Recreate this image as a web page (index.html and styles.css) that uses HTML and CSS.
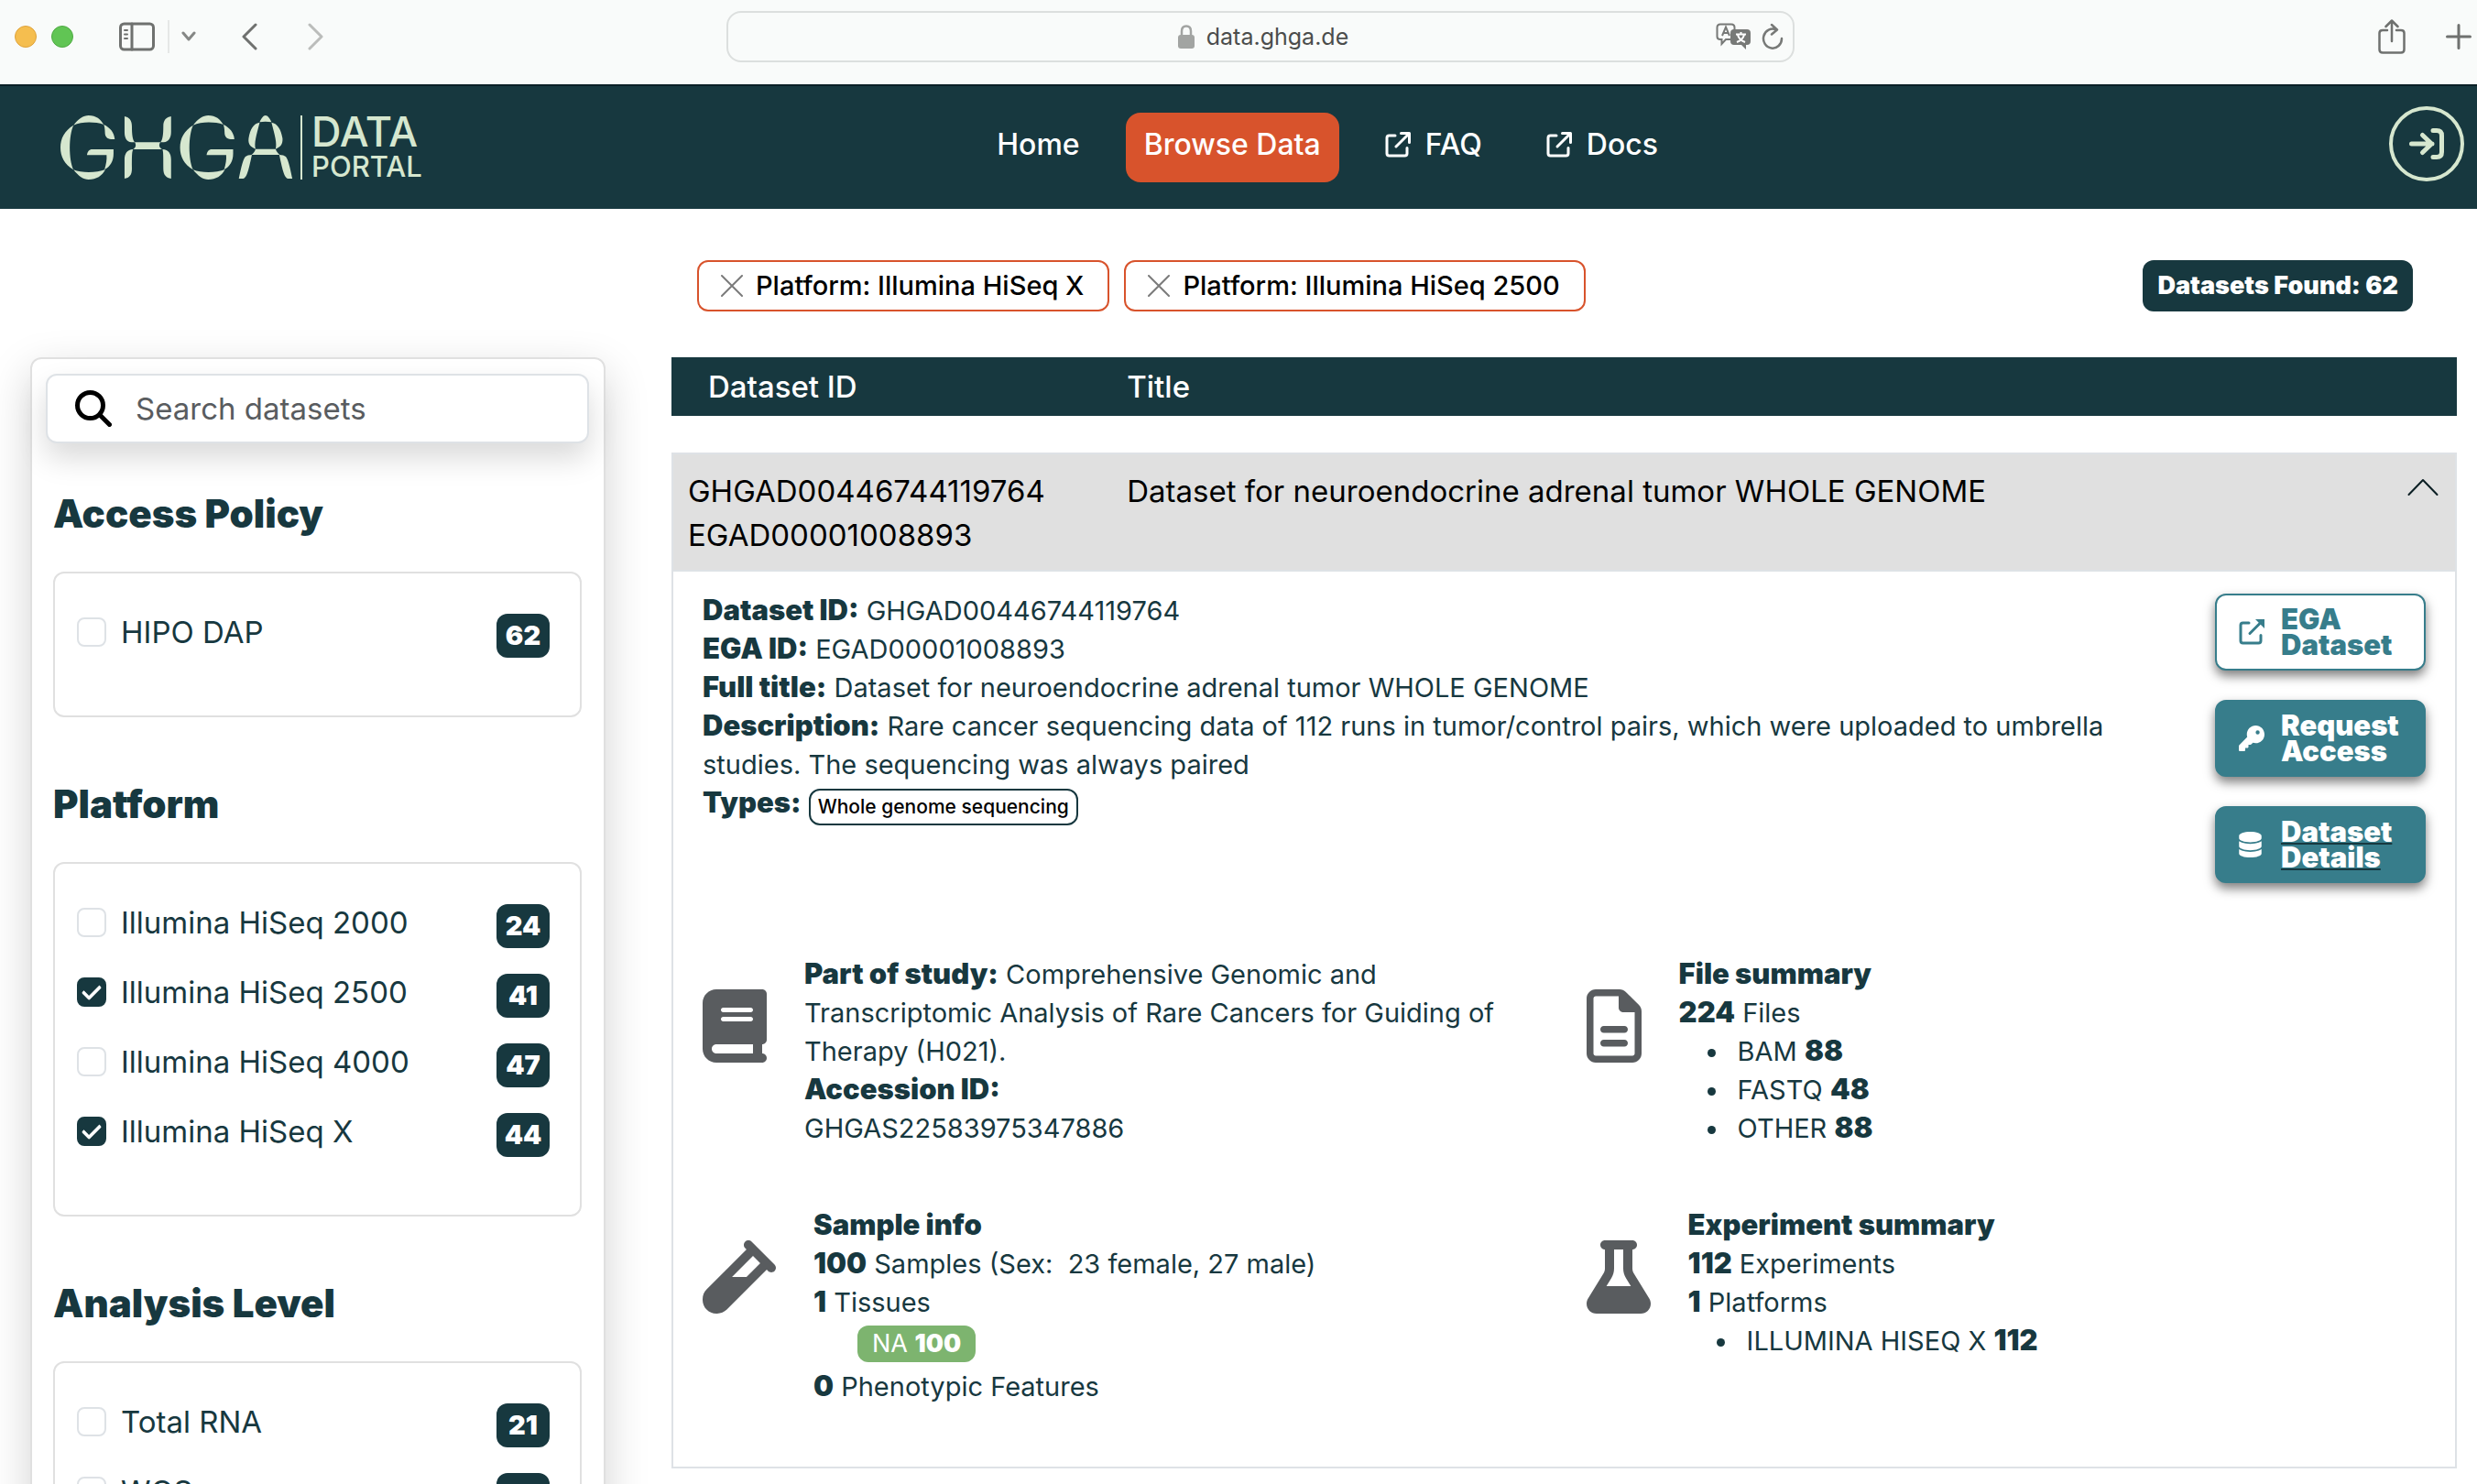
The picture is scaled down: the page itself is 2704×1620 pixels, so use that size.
FILE: index.html
```html
<!DOCTYPE html>
<html lang="en">
<head>
<meta charset="utf-8">
<meta name="viewport" content="width=device-width, initial-scale=1">
<title>GHGA Data Portal</title>
<link rel="stylesheet" href="styles.css">
</head>
<body>
<svg class="sprite" aria-hidden="true">
  <symbol id="external" viewBox="0 0 28 28"><path d="M11 4H4.500Q2 4 2 6.500V23.500Q2 26 4.500 26H21.500Q24 26 24 23.500V17.500M12 16L24 4" fill="none" stroke="currentColor" stroke-width="3" stroke-linecap="round" stroke-linejoin="round"/><path d="M17.500 1.500H26.500V11.500" fill="none" stroke="currentColor" stroke-width="3" stroke-linecap="round" stroke-linejoin="round"/></symbol>
  <symbol id="cross" viewBox="0 0 24 24"><path d="M1 1L23 23M23 1L1 23" fill="none" stroke="currentColor" stroke-width="2" stroke-linecap="round"/></symbol>
</svg>

<div class="browser">
  <div class="browser-left">
    <div class="lights"><span class="light light-min"></span><span class="light light-max"></span></div>
    <div class="tabs-tools">
      <button class="plain" aria-label="Show sidebar"><svg width="40" height="32" viewBox="0 0 40 32" fill="none" stroke="#6f716f" stroke-width="3" stroke-linecap="round"><rect x="1.500" y="2" width="36" height="28" rx="4"/><path d="M14 2V30"/><path d="M6 9H9M6 13.500H9M6 18H9" stroke-width="2"/></svg></button>
      <span class="divider"></span>
      <button class="plain" aria-label="Tab groups"><svg width="16" height="12" viewBox="0 0 16 12" fill="none" stroke="#858785" stroke-width="3" stroke-linecap="round" stroke-linejoin="round"><path d="M2 2L8 9L14 2"/></svg></button>
    </div>
    <div class="history">
      <button class="plain" aria-label="Back"><svg width="17" height="30" viewBox="0 0 17 30" fill="none" stroke="#6f716f" stroke-width="3" stroke-linecap="round" stroke-linejoin="round"><path d="M15 2L2 15L15 28"/></svg></button>
      <button class="plain" aria-label="Forward"><svg width="17" height="30" viewBox="0 0 17 30" fill="none" stroke="#bbbdbb" stroke-width="3" stroke-linecap="round" stroke-linejoin="round"><path d="M2 2L15 15L2 28"/></svg></button>
    </div>
  </div>
  <div class="address">
    <span></span>
    <span class="url"><svg width="18" height="26" viewBox="0 0 18 26"><rect y="11" width="18" height="15" rx="3" fill="#a2a4a2"/><path d="M4 12V7Q4 1.500 9 1.500T14 7V12" fill="none" stroke="#a2a4a2" stroke-width="2.500"/></svg>data.ghga.de</span>
    <span class="address-tools">
      <button class="plain" aria-label="Translate"><svg width="38" height="30" viewBox="0 0 38 30"><path d="M5 1.500H17Q20.500 1.500 20.500 5V15Q20.500 18 17 18H11L6.500 23V18H5Q1.500 18 1.500 15V5Q1.500 1.500 5 1.500Z" fill="none" stroke="#777977" stroke-width="2"/><path d="M7 14L11 4.500L15 14M8.500 11H13.500" fill="none" stroke="#777977" stroke-width="2"/><path d="M20 7H34Q38 7 38 11V20Q38 24 34 24H33V29L28 24H20Q16 24 16 20V11Q16 7 20 7Z" fill="#777977"/><path d="M22 12.500H33M27.500 10V12.500M31 13C30 17 27 19.500 23 21M24 13C25 17 28 19.500 32 21" fill="none" stroke="#fff" stroke-width="2"/></svg></button>
      <button class="plain" aria-label="Reload"><svg width="24" height="30" viewBox="0 0 24 30" fill="none" stroke="#777977" stroke-width="2.500" stroke-linecap="round" stroke-linejoin="round"><path d="M22 17A10 10.500 0 1 1 16 7.500M11 2L17 7.500L11 12.500"/></svg></button>
    </span>
  </div>
  <div class="browser-right">
    <button class="plain" aria-label="Share"><svg width="30" height="38" viewBox="0 0 30 38" fill="none" stroke="#6f716f" stroke-width="2.500" stroke-linecap="round" stroke-linejoin="round"><path d="M10 12H5Q1.500 12 1.500 15V33Q1.500 36.500 5 36.500H25Q28.500 36.500 28.500 33V15Q28.500 12 25 12H20M15 24V2M8.500 8L15 1.500L21.500 8"/></svg></button>
    <button class="plain" aria-label="New tab"><svg width="28" height="28" viewBox="0 0 28 28" stroke="#6f716f" stroke-width="3" stroke-linecap="round"><path d="M14 1.500V26.500M1.500 14H26.500"/></svg></button>
  </div>
</div>

<header class="header">
  <a class="brand" href="#" aria-label="GHGA Data Portal">
    <svg class="mark" viewBox="148 375 570 210" preserveAspectRatio="none" aria-hidden="true">
      <g fill="#d6e7cf">
        <g id="ring">
          <path d="M180 407C192 386 204 375 217 375C236 375 246 388 254 405C232 395 200 395 180 407Z"/>
          <path d="M180 407C158 425 148 450 148 480C148 510 158 535 180 553C168 520 168 440 180 407Z"/>
          <path d="M180 553C192 574 204 585 217 585C236 585 250 573 258 552C236 564 200 564 180 553Z"/>
          <path d="M254 405C270 415 280 432 281 453H272C262 452 257 445 257 430C257 420 256 412 254 405Z"/>
          <path d="M213 505C214 494 218 486 226 486H278V500C278 525 270 542 256 552C260 535 262 520 261 505Z"/>
        </g>
        <use href="#ring" x="293"/>
        <path d="M305 378C315 380 323 390 323 410C323 440 325 455 330 463H322C310 462 305 448 305 430Z"/>
        <path d="M419 378C408 380 400 390 400 410C400 440 398 455 393 463H401C413 462 419 448 419 430Z"/>
        <path d="M330 463H393C388 472 390 480 397 486H326C333 480 334 472 330 463Z"/>
        <path d="M305 582V520C305 500 311 487 326 486C323 495 323 505 323 550C323 570 317 580 305 582Z"/>
        <path d="M419 582V520C419 500 413 487 398 486C400 495 400 505 400 550C400 570 407 580 419 582Z"/>
        <path d="M636 397C640 385 645 375 650 375C656 375 661 385 665 397C655 395 645 395 636 397Z"/>
        <path d="M636 398C628 440 622 465 626 485C614 478 607 470 609 450C613 420 620 402 636 398Z"/>
        <path d="M665 398C673 440 679 465 675 485C687 478 693 470 692 450C688 420 680 402 665 398Z"/>
        <path d="M626 485H675C677 492 680 498 685 504H616C622 498 624 492 626 485Z"/>
        <path d="M617 504C608 560 604 582 594 582H585C588 565 594 520 601 510Q606 504 617 504Z"/>
        <path d="M684 504C693 560 697 582 707 582H716C713 565 707 520 700 510Q695 504 684 504Z"/>
      </g>
    </svg>
    <span class="brand-text"><span class="brand-data">DATA</span><span class="brand-portal">PORTAL</span></span>
  </a>
  <nav class="nav">
    <a class="nav-link" href="#">Home</a>
    <a class="nav-link nav-active" href="#">Browse Data</a>
    <a class="nav-link" href="#"><svg class="icon-28"><use href="#external"/></svg>FAQ</a>
    <a class="nav-link" href="#"><svg class="icon-28"><use href="#external"/></svg>Docs</a>
  </nav>
  <div class="account">
    <button class="login" aria-label="Log in"><svg width="38" height="34" viewBox="0 0 38 34" fill="none" stroke="currentColor" stroke-width="5" stroke-linecap="round" stroke-linejoin="round"><path d="M2.500 17H25M14.500 7.500L24.500 17L14.500 26.500M26 2.500H30Q35.500 2.500 35.500 8V26Q35.500 31.500 30 31.500H26"/></svg></button>
  </div>
</header>

<main class="main">
  <div class="toolbar">
    <div class="chips">
      <button class="chip"><svg class="icon-24"><use href="#cross"/></svg>Platform: Illumina HiSeq X</button>
      <button class="chip"><svg class="icon-24"><use href="#cross"/></svg>Platform: Illumina HiSeq 2500</button>
    </div>
    <span class="found">Datasets Found: 62</span>
  </div>

  <aside class="sidebar">
    <div class="search">
      <svg width="40" height="40" viewBox="0 0 40 40" fill="none" stroke="#000" stroke-width="5" stroke-linecap="round" aria-hidden="true"><circle cx="16.500" cy="16.500" r="14"/><path d="M27 27L37.500 37.500"/></svg>
      <input class="search-input" type="search" placeholder="Search datasets" aria-label="Search datasets">
    </div>
    <section class="facet">
      <h2 class="facet-title">Access Policy</h2>
      <ul class="facet-card">
        <li class="option"><label class="option-label"><input class="check" type="checkbox">HIPO DAP</label><span class="count">62</span></li>
      </ul>
    </section>
    <section class="facet">
      <h2 class="facet-title">Platform</h2>
      <ul class="facet-card">
        <li class="option"><label class="option-label"><input class="check" type="checkbox">Illumina HiSeq 2000</label><span class="count">24</span></li>
        <li class="option"><label class="option-label"><input class="check" type="checkbox" checked>Illumina HiSeq 2500</label><span class="count">41</span></li>
        <li class="option"><label class="option-label"><input class="check" type="checkbox">Illumina HiSeq 4000</label><span class="count">47</span></li>
        <li class="option"><label class="option-label"><input class="check" type="checkbox" checked>Illumina HiSeq X</label><span class="count">44</span></li>
      </ul>
    </section>
    <section class="facet">
      <h2 class="facet-title">Analysis Level</h2>
      <ul class="facet-card">
        <li class="option"><label class="option-label"><input class="check" type="checkbox">Total RNA</label><span class="count">21</span></li>
        <li class="option"><label class="option-label"><input class="check" type="checkbox">WGS</label><span class="count">26</span></li>
      </ul>
    </section>
  </aside>

  <table class="results">
    <thead>
      <tr><th class="col-id" scope="col">Dataset ID</th><th scope="col">Title</th></tr>
    </thead>
    <tbody>
      <tr class="summary">
        <td>GHGAD00446744119764<br>EGAD00001008893</td>
        <td><div class="summary-title">Dataset for neuroendocrine adrenal tumor WHOLE GENOME<button class="plain toggle" aria-label="Collapse"><svg width="34" height="20" viewBox="0 0 34 20" fill="none" stroke="#0b1f24" stroke-width="2" stroke-linecap="round" stroke-linejoin="round"><path d="M1.500 18L17 2L32.500 18"/></svg></button></div></td>
      </tr>
      <tr>
        <td class="detail" colspan="2">
          <div class="overview">
            <div class="facts">
              <p><strong>Dataset ID:</strong> GHGAD00446744119764</p>
              <p><strong>EGA ID:</strong> EGAD00001008893</p>
              <p><strong>Full title:</strong> Dataset for neuroendocrine adrenal tumor WHOLE GENOME</p>
              <p><strong>Description:</strong> Rare cancer sequencing data of 112 runs in tumor/control pairs, which were uploaded to umbrella studies. The sequencing was always paired</p>
              <p class="types"><strong>Types:</strong><span class="type">Whole genome sequencing</span></p>
            </div>
            <div class="actions">
              <a class="action action-outline" href="#"><span class="action-icon"><svg width="28" height="28" viewBox="0 0 28 28"><path d="M11 4H4.500Q2 4 2 6.500V23.500Q2 26 4.500 26H21.500Q24 26 24 23.500V17.500M12 15.500L23 4.500" fill="none" stroke="currentColor" stroke-width="3" stroke-linecap="round"/><path d="M18 0H28V10Z" fill="currentColor"/></svg></span>EGA Dataset</a>
              <button class="action"><span class="action-icon"><svg width="28" height="28" viewBox="0 0 512 512" fill="currentColor"><path d="M336 352c97.200 0 176-78.800 176-176S433.200 0 336 0S160 78.800 160 176c0 18.700 2.900 36.800 8.300 53.700L7 391c-4.500 4.500-7 10.600-7 17v80c0 13.300 10.700 24 24 24h80c13.300 0 24-10.700 24-24V448h40c13.300 0 24-10.700 24-24V384h40c6.400 0 12.500-2.500 17-7l33.300-33.300c16.900 5.400 35 8.300 53.700 8.300zM376 96a40 40 0 1 1 0 80 40 40 0 1 1 0-80z"/></svg></span>Request Access</button>
              <a class="action action-details" href="#"><span class="action-icon"><svg width="25" height="28" viewBox="0 0 448 512" fill="currentColor"><path d="M448 80v48c0 44.200-100.300 80-224 80S0 172.200 0 128V80C0 35.800 100.300 0 224 0S448 35.800 448 80zM393.200 214.700c20.800-7.400 39.900-16.900 54.800-28.600V288c0 44.200-100.300 80-224 80S0 332.200 0 288V186.100c14.900 11.800 34 21.200 54.800 28.600C99.700 230.700 159.500 240 224 240s124.300-9.300 169.200-25.300zM0 346.100c14.900 11.800 34 21.200 54.800 28.600C99.700 390.700 159.500 400 224 400s124.300-9.300 169.200-25.300c20.800-7.400 39.900-16.900 54.800-28.600V432c0 44.200-100.300 80-224 80S0 476.200 0 432V346.100z"/></svg></span>Dataset Details</a>
            </div>
          </div>
          <div class="panels">
            <section class="panel">
              <svg class="panel-icon" viewBox="0 0 448 512" width="70" height="80"><path d="M96 0C43 0 0 43 0 96V416c0 53 43 96 96 96H384h32c17.700 0 32-14.300 32-32s-14.300-32-32-32V384c17.700 0 32-14.300 32-32V32c0-17.700-14.300-32-32-32H384 96zm0 384H352v64H96c-17.700 0-32-14.300-32-32s14.300-32 32-32zm32-240c0-8.800 7.200-16 16-16H336c8.800 0 16 7.200 16 16s-7.200 16-16 16H144c-8.800 0-16-7.200-16-16zm16 48H336c8.800 0 16 7.200 16 16s-7.200 16-16 16H144c-8.800 0-16-7.200-16-16s7.200-16 16-16z"/></svg>
              <div>
                <p><strong>Part of study:</strong> Comprehensive Genomic and Transcriptomic Analysis of Rare Cancers for Guiding of Therapy (H021).</p>
                <p><strong>Accession ID:</strong><br>GHGAS22583975347886</p>
              </div>
            </section>
            <section class="panel">
              <svg class="panel-icon" viewBox="0 0 384 512" width="60" height="80"><path d="M64 464c-8.800 0-16-7.200-16-16V64c0-8.800 7.200-16 16-16H224v80c0 17.700 14.300 32 32 32h80V448c0 8.800-7.200 16-16 16H64zM64 0C28.700 0 0 28.700 0 64V448c0 35.300 28.700 64 64 64H320c35.300 0 64-28.700 64-64V154.500c0-17-6.700-33.300-18.700-45.300L274.700 18.700C262.700 6.700 246.500 0 229.500 0H64zm56 256c-13.300 0-24 10.700-24 24s10.700 24 24 24H264c13.300 0 24-10.700 24-24s-10.700-24-24-24H120zm0 96c-13.300 0-24 10.700-24 24s10.700 24 24 24H264c13.300 0 24-10.700 24-24s-10.700-24-24-24H120z"/></svg>
              <div>
                <p><strong>File summary</strong></p>
                <p><strong>224</strong> Files</p>
                <ul class="bullets"><li>BAM <strong>88</strong></li><li>FASTQ <strong>48</strong></li><li>OTHER <strong>88</strong></li></ul>
              </div>
            </section>
            <section class="panel">
              <svg class="panel-icon" viewBox="0 0 512 512" width="80" height="80"><path d="M342.600 9.400c-12.500-12.500-32.800-12.500-45.300 0s-12.500 32.800 0 45.300l9.400 9.400L28.100 342.600C10.100 360.600 0 385 0 410.500V416c0 53 43 96 96 96h5.500c25.500 0 49.900-10.100 67.900-28.100L448 205.300l9.400 9.400c12.500 12.500 32.800 12.500 45.300 0s12.500-32.800 0-45.300l-32-32-96-96-32-32zM205.300 256L352 109.300 402.700 160l-96 96H205.300z"/></svg>
              <div>
                <p><strong>Sample info</strong></p>
                <p><strong>100</strong> Samples (Sex: &nbsp;23 female, 27 male)</p>
                <p><strong>1</strong> Tissues</p>
                <p class="tissues"><span class="tissue">NA <b>100</b></span></p>
                <p><strong>0</strong> Phenotypic Features</p>
              </div>
            </section>
            <section class="panel">
              <svg class="panel-icon" viewBox="0 0 448 512" width="70" height="80"><path d="M288 0H160 128C110.300 0 96 14.300 96 32s14.300 32 32 32V196.800c0 11.800-3.300 23.500-9.500 33.500L10.300 406.200C3.600 417.200 0 429.700 0 442.600C0 480.900 31.100 512 69.400 512H378.600c38.300 0 69.400-31.100 69.400-69.400c0-12.800-3.600-25.400-10.300-36.400L329.500 230.400c-6.200-10.100-9.500-21.700-9.500-33.500V64c17.700 0 32-14.300 32-32s-14.300-32-32-32H288zM192 196.800V64h64V196.800c0 23.700 6.600 46.900 19 67.100L309.500 320h-171L173 263.900c12.400-20.200 19-43.400 19-67.100z"/></svg>
              <div>
                <p><strong>Experiment summary</strong></p>
                <p><strong>112</strong> Experiments</p>
                <p><strong>1</strong> Platforms</p>
                <ul class="bullets"><li>ILLUMINA HISEQ X <strong>112</strong></li></ul>
              </div>
            </section>
          </div>
        </td>
      </tr>
    </tbody>
  </table>
</main>
</body>
</html>
```
FILE: styles.css
```css
:root {
  --dark: #17383f;
  --teal: #377d8b;
  --orange: #d8532c;
  --mint: #d6e7cf;
  --line: #dee2e6;
  --grey-line: #e0e0e0;
}

* { box-sizing: border-box; }

body {
  margin: 0;
  height: 100vh;
  overflow: hidden;
  background: #fff;
  color: var(--dark);
  font-family: Inter, "Liberation Sans", sans-serif;
  font-size: 29px;
  line-height: 42px;
}

h2, p, ul { margin: 0; padding: 0; }
ul { list-style: none; }
a { color: inherit; text-decoration: none; }
button, input { font: inherit; color: inherit; }
svg { display: block; flex: none; }

.sprite { width: 0; height: 0; position: absolute; }
.plain { padding: 0; border: 0; background: none; }
.icon-28 { width: 28px; height: 28px; }
.icon-24 { width: 24px; height: 24px; }

/* browser bar */
.browser {
  display: grid;
  grid-template-columns: 793fr 1166fr 745fr;
  padding: 12px 0 24px;
  background: #f9fbfa;
}
.browser-left { display: flex; align-items: center; padding-left: 16px; gap: 50px; }
.lights { display: flex; gap: 16px; }
.light { width: 24px; height: 24px; border-radius: 50%; }
.light-min { background: #f5be4f; border: 1px solid #dfa33c; }
.light-max { background: #61c554; border: 1px solid #4faa43; }
.tabs-tools { display: flex; align-items: center; gap: 13px; }
.divider { width: 2px; height: 36px; background: #e6e8e7; }
.history { display: flex; gap: 55px; }
.address {
  display: grid;
  grid-template-columns: 1fr auto 1fr;
  align-items: center;
  height: 56px;
  padding: 0 10px 0 16px;
  border: 2px solid #dcdfde;
  border-radius: 16px;
}
.url { display: flex; align-items: center; gap: 13px; color: #4b4d4c; font-size: 25px; }
.address-tools { display: flex; justify-content: flex-end; align-items: center; gap: 12px; }
.browser-right { display: flex; align-items: center; justify-content: flex-end; gap: 44px; padding-right: 6px; }

/* site header */
.header {
  display: grid;
  grid-template-columns: 11fr auto 9fr;
  align-items: center;
  height: 136px;
  border-top: 2px solid #0a2026;
  background: var(--dark);
  color: #fff;
}
.brand { display: flex; gap: 8px; padding-left: 66px; color: var(--mint); font-weight: 500; }
.mark { width: 254px; height: 70px; }
.brand-text { display: flex; flex-direction: column; height: 70px; padding-left: 10px; border-left: 2px solid var(--mint); }
.brand-data { font-size: 45px; line-height: 36px; }
.brand-portal { font-size: 31px; line-height: 40px; }
.nav { display: flex; gap: 30px; }
.nav-link {
  display: flex;
  align-items: center;
  gap: 16px;
  padding: 16px 20px 22px;
  border-radius: 16px;
  font-size: 32px;
  font-weight: 500;
  line-height: 38px;
}
.nav-active { background: var(--orange); }
.account { display: flex; justify-content: flex-end; padding: 0 14px 8px 0; }
.login {
  display: grid;
  place-items: center;
  width: 82px;
  height: 82px;
  padding: 0;
  border: 4px solid var(--mint);
  border-radius: 50%;
  background: none;
  color: var(--mint);
}

/* page layout */
.main {
  display: grid;
  grid-template-columns: minmax(0, 29fr) minmax(0, 90fr);
  column-gap: 72px;
  align-items: start;
  padding: 56px 22px 0 33px;
}
.toolbar {
  grid-column: 2;
  display: flex;
  justify-content: space-between;
  padding: 0 48px 50px 28px;
}
.chips { display: flex; gap: 16px; }
.chip {
  display: flex;
  align-items: center;
  gap: 14px;
  height: 56px;
  padding: 0 26px 0 24px;
  border: 2px solid var(--orange);
  border-radius: 12px;
  background: #fff;
  color: #000;
  font-weight: 500;
}
.chip svg { color: #7b7b7b; }
.found {
  height: 56px;
  padding: 0 16px;
  border-radius: 12px;
  background: var(--dark);
  color: #fff;
  font-size: 27px;
  font-weight: 900;
  line-height: 56px;
}

/* filters */
.sidebar {
  padding: 16px 16px 64px 15px;
  border: 2px solid var(--grey-line);
  border-radius: 12px;
  box-shadow: 0 16px 48px rgba(0, 0, 0, .175);
}
.search {
  display: flex;
  align-items: center;
  gap: 26px;
  height: 76px;
  margin-bottom: 51px;
  padding: 0 30px;
  border: 2px solid var(--line);
  border-radius: 12px;
  background: #fff;
  box-shadow: 0 16px 32px rgba(0, 0, 0, .15);
}
.search-input { flex: 1; min-width: 0; padding: 0; border: 0; outline: 0; background: none; font-size: 33px; }
.search-input::placeholder { color: #595c5f; opacity: 1; }
.facet { padding: 0 8px; margin-bottom: 69px; }
.facet-title { margin-bottom: 37px; font-size: 42px; font-weight: 900; line-height: 52px; }
.facet-card {
  display: flex;
  flex-direction: column;
  gap: 28px;
  padding: 44px 33px 63px 24px;
  border: 2px solid var(--grey-line);
  border-radius: 12px;
}
.option { display: flex; justify-content: space-between; align-items: flex-start; }
.option-label { display: flex; align-items: center; gap: 16px; font-size: 33px; line-height: 40px; }
.check {
  display: grid;
  place-items: center;
  appearance: none;
  width: 32px;
  height: 32px;
  margin: 0;
  border: 2px solid var(--line);
  border-radius: 8px;
}
.check:checked { border-color: var(--dark); background: var(--dark); }
.check:checked::before {
  content: "";
  width: 16px;
  height: 8px;
  margin-bottom: 4px;
  border: solid #fff;
  border-width: 0 0 4px 4px;
  border-radius: 2px;
  transform: rotate(-45deg);
}
.count {
  width: 58px;
  height: 48px;
  border-radius: 12px;
  background: var(--dark);
  color: #fff;
  font-size: 29px;
  font-weight: 900;
  line-height: 48px;
  text-align: center;
}

/* results */
.results { width: 100%; border-spacing: 0; }
.results th {
  height: 64px;
  padding: 0 10px;
  background: var(--dark);
  color: #fff;
  font-size: 33px;
  font-weight: 500;
  text-align: left;
}
.results .col-id { width: 25%; padding-left: 40px; }
.results td { padding: 0; vertical-align: top; }
.results tbody::before { content: ""; display: block; height: 40px; }
.results .summary td {
  padding: 16px 10px 14px;
  border: solid var(--line);
  border-width: 2px 0;
  background: var(--grey-line);
  color: #000;
  font-size: 33px;
  line-height: 48px;
}
.results .summary td:first-child { padding-left: 16px; border-left-width: 2px; }
.results .summary td:last-child { padding-right: 18px; border-right-width: 2px; }
.summary-title { display: flex; justify-content: space-between; }
.toggle { height: 40px; }
.results .detail { padding: 22px 32px 66px; border: solid var(--line); border-width: 0 2px 2px; }

.overview { display: flex; gap: 60px; }
.facts { flex: 1; }
strong { font-size: 31px; font-weight: 900; line-height: 40px; }
.types { display: flex; gap: 8px; }
.type {
  height: 40px;
  padding: 0 8px;
  margin-top: 5px;
  border: 2px solid var(--dark);
  border-radius: 12px;
  color: #000;
  font-size: 21px;
  font-weight: 500;
  line-height: 36px;
}
.actions { display: flex; flex-direction: column; gap: 32px; margin-top: 2px; }
.action {
  display: flex;
  align-items: center;
  gap: 18px;
  width: 230px;
  height: 84px;
  padding: 0 16px 0 24px;
  border: 2px solid var(--teal);
  border-radius: 12px;
  background: var(--teal);
  color: #fff;
  font-size: 31px;
  font-weight: 900;
  line-height: 28px;
  text-align: left;
  box-shadow: 0 6px 12px rgba(0, 0, 0, .5);
}
.action-icon { flex: none; width: 28px; }
.action-outline { background: #fff; color: var(--teal); }
.action-details { text-decoration: underline 2px var(--dark); }

.panels {
  display: grid;
  grid-template-columns: 20fr 19fr;
  row-gap: 64px;
  padding-top: 79px;
}
.panel { display: flex; align-items: flex-start; gap: 41px; padding-right: 48px; }
.panel-icon { margin-top: 37px; fill: #595c5f; }
.bullets { padding-left: 56px; list-style: disc; }
.bullets li { padding-left: 8px; }
.tissues { display: flex; padding: 4px 0 6px 48px; }
.tissue {
  padding: 0 16px;
  border-radius: 12px;
  background: #7db46f;
  color: #fff;
  font-size: 27px;
  line-height: 40px;
}
.tissue b { font-weight: 900; }
```
